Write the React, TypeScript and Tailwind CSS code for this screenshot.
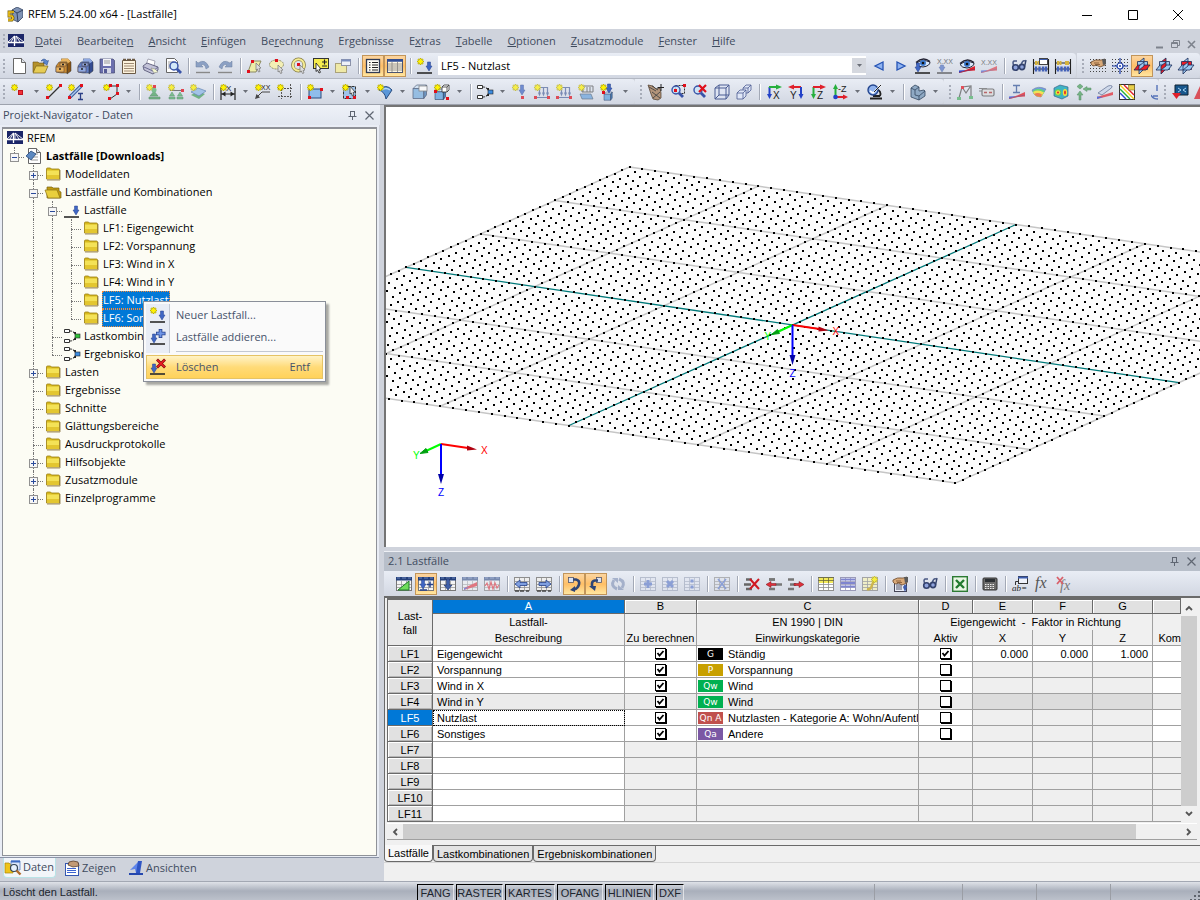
import type { ReactNode } from "react";

/* ── Icon parts ── */

const Star = ({ x = 0, y = 0 }: { x?: number; y?: number }) => (
  <g transform={`translate(${x} ${y})`}>
    <path d="M3.5 0v7M0 3.5h7M1 1l5 5M6 1L1 6" stroke="#b5a800" strokeWidth="1.6" />
    <path d="M3.5 .8v5.4M.8 3.5h5.4M1.5 1.5l4 4M5.5 1.5l-4 4" stroke="#fff200" strokeWidth="1" />
  </g>
);

const Red = ({ x, y }: { x: number; y: number }) => (
  <rect x={x} y={y} width="3" height="3" fill="#e0101c" />
);

const Down = ({ x = 8, y = 2, h = 11, c = "#3f66c4" }: { x?: number; y?: number; h?: number; c?: string }) => (
  <path d={`M${x - 1.5} ${y}h3v${h - 5}h1.500l-3 5l-3-5h1.500z`} fill={c} stroke="#26418c" strokeWidth=".5" />
);

const Dots = () => (
  <path
    d="M0 1.5h16M0 4.5h16M0 7.5h16M0 10.5h16M0 13.5h16"
    stroke="#444"
    strokeWidth="1"
    strokeDasharray="1 2"
  />
);

const Sheet = ({ head = "#24407c" }: { head?: string }) => (
  <>
    <rect x=".5" y="1.5" width="15" height="13" fill="#f4f4f4" stroke="#777" />
    <path d="M1 8.5h14M1 11.5h14M5.5 5v9M10.5 5v9" stroke="#999" strokeWidth=".8" />
    <rect x="0" y="1" width="16" height="3.5" fill={head} />
    <path d="M1 2h3M6 2h4M12 2h3" stroke="#7f97cc" strokeWidth=".8" />
  </>
);

const Grid = ({ c = "#8e8e8e", bg = "#eee" }: { c?: string; bg?: string }) => (
  <>
    <rect x=".5" y="1.5" width="15" height="13" fill={bg} stroke={c} />
    <path d="M1 5.5h14M1 8.5h14M1 11.5h14M5.5 2v12M10.5 2v12" stroke={c} strokeWidth=".8" />
  </>
);

const Eye = ({ y = 0 }: { y?: number }) => (
  <g transform={`translate(0 ${y})`}>
    <path d="M1 5.5Q7 .5 15 4Q15 8 8 9Q3 9 1 5.5z" fill="#d8e8fb" stroke="#223" />
    <path d="M1 4.500Q8-2 15 3.500" fill="none" stroke="#223" strokeWidth="1.400" />
    <circle cx="8" cy="5" r="3" fill="#3d7bd0" />
    <circle cx="8" cy="5" r="1.3" fill="#111" />
  </g>
);

const Goggles = () => (
  <>
    <path d="M3 8Q1 4 3 3l3 0M10 8Q11 2 14 3" fill="none" stroke="#4b5a85" strokeWidth="1.500" />
    <circle cx="4.500" cy="9.500" r="2.800" fill="#8fa3dc" stroke="#33426d" strokeWidth="1.600" />
    <circle cx="11" cy="9" r="2.600" fill="#8fa3dc" stroke="#33426d" strokeWidth="1.600" />
    <path d="M13.500 9L15 2M7 8.500h2" stroke="#33426d" strokeWidth="1.400" />
  </>
);

const Hand = () => (
  <>
    <path d="M1 4Q5 1 11 2L15 1v6L10 9Q7 6 3 8Q0 6 1 4z" fill="#d9a978" stroke="#5b3a20" strokeWidth=".7" />
    <path d="M4 5h5M5 6.5h5" stroke="#7d5330" strokeWidth=".8" />
    <path d="M12 1h4v5l-3 1z" fill="#5a5a5a" />
  </>
);

const Cabinet = ({ a, b, c }: { a: string; b: string; c: string }) => (
  <>
    <path d="M6 1h7l3 3v9l-4 3V6z" fill={c} stroke="#333" strokeWidth=".5" />
    <path d="M5 4l2-3.500h6l2.500 3-3 2z" fill={a} />
    <path d="M1 8l3-4h8v11H6l-5-1z" fill={b} stroke="#333" strokeWidth=".5" />
    <path d="M5 5h6v3H5zM1 9h8v5H1z" fill={a} stroke="#433" strokeWidth=".5" />
    <path d="M7 6.500h2M4 11h2" stroke="#222" strokeWidth="1.300" />
  </>
);

const Lens = ({ x = 9, y = 9 }: { x?: number; y?: number }) => (
  <>
    <path d={`M${x + 2} ${y + 2}l5 5`} stroke="#3853a8" strokeWidth="2.800" />
    <circle cx={x} cy={y} r="4" fill="#c9e4f7" fillOpacity=".8" stroke="#3853a8" strokeWidth="1.400" />
  </>
);

const Planes = ({ hot }: { hot: 0 | 1 | 2 }) => {
  const c = (n: number) => (n === hot ? "#ed1c24" : "#9cc9f0");
  return (
    <g stroke="#1a2c58" strokeWidth=".8">
      <path d="M5 4l5-4v11l-5 5z" fill={c(1)} />
      <path d="M3.500 3.500h10v8h-10z" fill={c(2)} />
      <path d="M0 12L4 7h12l-4 5z" fill={c(0)} />
      <path d="M5 12V8l5-4v4z" fill={c(1)} />
    </g>
  );
};

const Doc = () => (
  <>
    <path d="M2.500 .5h8l4 4v11h-12z" fill="#fff" stroke="#666" />
    <path d="M10.500 .5v4h4" fill="#dfe3ea" stroke="#666" />
  </>
);

const Abacus = () => (
  <>
    <path d="M.5 1v15M15.500 1v15M0 5h16M0 11h16" stroke="#222" strokeWidth="1.100" />
    <path d="M3 3v4M5.500 3v4M11 3v4M13 3v4" stroke="#d4b23c" strokeWidth="2" />
    <path d="M3 8.500v5M6.500 8.500v5M10 8.500v5M13 8.500v5" stroke="#4361b8" strokeWidth="2.400" />
  </>
);

const Ground = () => <path d="M0 15h15" stroke="#2a2a2a" strokeWidth="1.600" />;

const Diag = () => (
  <>
    <path d="M0 15V12.500L8 12z" fill="#2b4bd8" />
    <path d="M0 15L16 8v4.500L8 13z" fill="#e3202b" />
    <path d="M0 14.500L16 11" stroke="#8b2b55" strokeWidth=".8" />
  </>
);

const Cube = ({ x = 0, y = 0, s = 1 }: { x?: number; y?: number; s?: number }) => (
  <g transform={`translate(${x} ${y}) scale(${s})`} stroke="#2b3a5c" strokeWidth=".8">
    <path d="M0 4l4-4h11l-3 4z" fill="#cfe3f5" />
    <path d="M0 4h12v11H0z" fill="#7fb2e0" />
    <path d="M12 4l3-4v11l-3 4z" fill="#4b7fb5" />
  </g>
);

const Combi = ({ c }: { c: string }) => (
  <>
    <path d="M.5 1.500h5v3h-5zM.5 11.500h5v3h-5z" fill="#fff" stroke="#333" />
    <path d="M6 3Q10 3 11 6M6 13Q10 13 11 10" fill="none" stroke="#333" strokeDasharray="2 1" />
    <path d="M9 4l3 0v4zM9 12l3-4v4z" fill="#222" />
    <rect x="11" y="6" width="5" height="4" fill={c} stroke="#222" strokeWidth=".6" />
  </>
);

const LoadFrame = () => (
  <>
    <path d="M5 3.500h9M5.500 3v7M9.500 3v7M13.500 3v7M1 13.500h14" fill="none" stroke="#52689e" strokeWidth="1.200" />
    <path d="M4 8.500h3l-1.500 4zM8 8.500h3l-1.500 4zM12 8.500h3l-1.500 4z" fill="#52689e" />
    <Star />
    <Red x={0} y={12} />
    <Red x={13} y={12} />
  </>
);

const Letter = ({ x, y, s = 8, c = "#222", serif, children }: { x: number; y: number; s?: number; c?: string; serif?: boolean; children: string }) => (
  <text x={x} y={y} fontSize={s} fill={c} fontFamily={serif ? "Liberation Serif" : "Liberation Sans"} fontStyle={serif ? "italic" : "normal"}>
    {children}
  </text>
);

const Folder = ({ open }: { open?: boolean }) =>
  open ? (
    <>
      <path d="M2 3h5l1 1h6v3l2 1v6H2z" fill="#c19b12" stroke="#7a6210" strokeWidth=".7" />
      <path d="M0 6h12l3 8H3z" fill="#e9cf3d" stroke="#8a7114" strokeWidth=".7" />
    </>
  ) : (
    <>
      <path d="M1.500 4V3q0-1 1-1h3l1 1h7q1 0 1 1v9H1.500z" fill="#d8ba1e" stroke="#9a7d10" strokeWidth=".8" />
      <path d="M2 4.500h12V12H2z" fill="#f4e257" />
      <path d="M2 9h12v4H2z" fill="#e3c630" />
      <path d="M15 4v10H2" fill="none" stroke="#8a7440" strokeWidth=".8" />
    </>
  );

const Bridge = () => (
  <>
    <rect y="1" width="16" height="13" fill="#1b2668" />
    <path d="M0 9.500h16M6.500 3v10" stroke="#fff" strokeWidth="1.300" />
    <path d="M6.500 3L0 9M6.500 3L3 9" fill="none" stroke="#fff" strokeWidth=".9" />
    <path d="M8 3l8 6M8 3l4 6M8 3v6" fill="none" stroke="#fff" strokeWidth=".9" />
  </>
);

const RowArrows = ({ c, flip }: { c: string; flip?: boolean }) => (
  <>
    <path d={flip ? "M0 3.500h6M0 13h6" : "M10 8.500h6M3 3.500h6M3 13h6"} stroke="#777" strokeWidth="2.500" />
    <path d={flip ? "M2 8.500h6" : "M3 3.500h6"} stroke="#777" strokeWidth="2.500" />
    <path d={flip ? "M6 7.500h5V5.500l5 3-5 3v-2H6z" : "M10 7.500H5v-2l-5 3 5 3v-2h5z"} fill={c} stroke="#771018" strokeWidth=".5" />
  </>
);

const Tool = ({ sym }: { sym: string }) => (
  <>
    <Grid bg="#e3e7f3" c="#9aa3b8" />
    <path d={sym} stroke="#5573c8" strokeWidth="3" fill="none" />
  </>
);

const Axes = ({ h, v, t }: { h: string; v: string; t: string }) => (
  <>
    <path d="M3.500 3v9" stroke={v} strokeWidth="2" />
    <path d="M1 10h5l-2.500 5z" fill={v} />
    <path d="M3 3h9" stroke={h} strokeWidth="2" />
    <path d="M10 .5v5l6-2.500z" fill={h} />
    <Letter x={7} y={15} s={10}>
      {t}
    </Letter>
  </>
);

const icons: Record<string, ReactNode> = {
  /* file */
  doc: <Doc />,
  open: (
    <>
      <path d="M0 4h5l1 1h5v3l-8 6H0z" fill="#b4912a" stroke="#6b5310" strokeWidth=".6" />
      <path d="M3 8h12l-3 7H0z" fill="#e6cc55" stroke="#7a6118" strokeWidth=".7" />
      <path d="M8 3Q11-1 14 3l1.500-.5L14 7l-4-2.500 1.500-.5Q10 2 8 3z" fill="#5b87cf" stroke="#27427f" strokeWidth=".5" />
    </>
  ),
  cabBrown: <Cabinet a="#e8b35e" b="#c98a32" c="#8a5614" />,
  cabBlue: <Cabinet a="#8fa9e2" b="#5f7dc6" c="#344c92" />,
  save: (
    <>
      <path d="M1 1h13l1.500 1.500V15H1z" fill="#6b6fae" stroke="#44466f" strokeWidth=".7" />
      <path d="M4 1h8v7H4z" fill="#f3f3f8" />
      <path d="M5 3h6M5 5h6" stroke="#999" />
      <path d="M4 10h8v5H4z" fill="#d4d6e4" />
      <path d="M5 11h3v4H5z" fill="#555a94" />
    </>
  ),
  pages: (
    <>
      <path d="M1.500 2.500h13v13h-13z" fill="#fdf3dd" stroke="#6b5a45" />
      <path d="M2 1.500h3M6 1.500h4M11 1.500h3" stroke="#6b5a45" strokeWidth="1.500" />
      <path d="M3 5.500h10M3 8h10M3 10.500h10M3 13h10" stroke="#937e66" strokeWidth=".9" />
    </>
  ),
  print: (
    <>
      <path d="M5 1l7 2-1 5-8-1z" fill="#fff" stroke="#889" strokeWidth=".7" />
      <path d="M0 8l4-3 11 4v3l-5 4-9-4z" fill="#c3c3d8" stroke="#4b4b6b" strokeWidth=".8" />
      <path d="M1 9l9 4 5-4" fill="none" stroke="#6b6b93" />
      <path d="M8 10l4 1 3 3-4 1z" fill="#f2f6cf" stroke="#888" strokeWidth=".6" />
    </>
  ),
  preview: (
    <>
      <path d="M1.500 .5h8l3 3v11h-11z" fill="#fff" stroke="#666" />
      <path d="M3 4h6M3 6h4M3 8h3M3 10h3" stroke="#888" strokeWidth=".8" />
      <Lens x={9} y={8} />
    </>
  ),
  undo: (
    <>
      <path d="M1 9V3l2 2Q10 0 14 9l-3 2Q10 5 6 7l2 2z" fill="#8ba0c4" stroke="#6b7f9f" strokeWidth=".5" />
      <path d="M1 14.500h14" stroke="#888" strokeWidth="1.400" />
    </>
  ),
  redo: (
    <>
      <path d="M15 9V3l-2 2Q6 0 2 9l3 2Q6 5 10 7L8 9z" fill="#8ba0c4" stroke="#6b7f9f" strokeWidth=".5" />
      <path d="M1 14.500h14" stroke="#888" strokeWidth="1.400" />
    </>
  ),
  selPara: (
    <>
      <path d="M5 3h9L9 14H1z" fill="#eeeea8" stroke="#8a8860" />
      <Red x={4} y={2} />
      <Red x={0} y={12} />
      <path d="M9 5l5 5-2 .5 1 3-1.500.5-1.200-3L9 12z" fill="#ddd" stroke="#777" strokeWidth=".7" />
    </>
  ),
  selEll: (
    <>
      <ellipse cx="7.500" cy="6.500" rx="7" ry="4.500" fill="#f3efb5" stroke="#8c8a66" strokeDasharray="2 1" />
      <Red x={6} y={1} />
      <path d="M9 7l5 5-2 .5 1 2.500-1.500.5-1.200-2.500L9 14z" fill="#ddd" stroke="#777" strokeWidth=".7" />
    </>
  ),
  selCirc: (
    <>
      <circle cx="7.500" cy="7" r="5.700" fill="none" stroke="#857c45" strokeWidth="3.400" />
      <circle cx="7.500" cy="7" r="5.700" fill="none" stroke="#f5ec93" strokeWidth="2" />
      <Red x={6} y={5} />
      <path d="M9 7l5 5-2 .5 1 2.500-1.500.5-1.200-2.500L9 14z" fill="#ddd" stroke="#777" strokeWidth=".7" />
    </>
  ),
  plusMinus: (
    <>
      <rect x=".5" y=".5" width="15" height="10" fill="#f6ec4e" stroke="#333" />
      <path d="M9 4h5M11.500 1.500v5M9 8h5" stroke="#222" strokeWidth="1.200" />
      <path d="M3 5l5 6-2 .3 1.500 3-1.500.7L4.600 12 3 13.500z" fill="#fff" stroke="#111" strokeWidth=".8" />
    </>
  ),
  winCopy: (
    <>
      <rect x=".5" y="5.500" width="11" height="9" fill="#efe9a6" stroke="#aaa27a" />
      <rect x="6.500" y="1.500" width="9" height="6" fill="#eef1f8" stroke="#8d93a8" />
      <path d="M6.500 2.500h9" stroke="#7b8ec0" strokeWidth="2" />
    </>
  ),
  navList: (
    <>
      <rect x="1.500" y="1.500" width="13" height="13" fill="#fffdf5" stroke="#2e3a55" strokeWidth="1.300" />
      <path d="M4 4.500h1.500M4 7h1.500M4 9.500h1.500M4 12h1.500M7 4.500h6M7 7h6M7 9.500h6M7 12h6" stroke="#222" strokeWidth="1.100" />
    </>
  ),
  tableWin: (
    <>
      <rect x=".5" y="1.500" width="15" height="13" fill="#fff8e4" stroke="#4b5570" />
      <path d="M0 2.500h16" stroke="#2e4d96" strokeWidth="2.500" />
      <path d="M1 6h14M1 8h14M1 10h14M1 12h14M5 4v10M10.500 4v10" stroke="#8d8b86" strokeWidth=".9" />
    </>
  ),
  newLoad: (
    <>
      <Star />
      <Down x={12} y={4} h={9} />
      <Ground />
    </>
  ),
  addLoad: (
    <>
      <Down x={4} y={5} h={9} />
      <path d="M10.500 0v9M6 4.500h9.500" stroke="#26418c" strokeWidth="3.600" />
      <path d="M10.500 .7v7.600M6.700 4.500h8" stroke="#6f95e6" strokeWidth="2" />
      <Ground />
    </>
  ),
  delLoad: (
    <>
      <Down x={4} y={5} h={9} />
      <path d="M7 .5l8 8M15 .5l-8 8" stroke="#7f0a12" strokeWidth="2.800" />
      <path d="M7.500 1l7 7M14.500 1l-7 7" stroke="#ed1c24" strokeWidth="1.600" />
      <Ground />
    </>
  ),
  load: (
    <>
      <Down x={12} y={4} h={9} />
      <Ground />
    </>
  ),
  prev: <path d="M12 4v8L4 8z" fill="#8fb3f0" stroke="#2453b5" strokeWidth="1.300" />,
  next: <path d="M4 4v8l8-4z" fill="#8fb3f0" stroke="#2453b5" strokeWidth="1.300" />,
  eyeLoad: (
    <>
      <Eye />
      <Down x={3} y={5} h={9} />
      <Ground />
    </>
  ),
  valLoad: (
    <g opacity=".6">
      <Letter x={0} y={6} s={7}>X.XX</Letter>
      <Down x={5} y={7} h={7} />
      <Ground />
    </g>
  ),
  eyeDiag: (
    <>
      <Diag />
      <Eye y={1} />
    </>
  ),
  valDiag: (
    <g opacity=".55">
      <Letter x={0} y={7} s={7}>X.XX</Letter>
      <Diag />
    </g>
  ),
  goggles: <Goggles />,
  abacusDoc: (
    <>
      <Abacus />
      <rect x="6.500" y=".5" width="8" height="6" fill="#fff" stroke="#444" />
      <path d="M6.500 1.500h8" stroke="#3d5cae" />
    </>
  ),
  abacus: <Abacus />,
  handGrid: (
    <>
      <Dots />
      <Hand />
    </>
  ),
  gridSnap: (
    <>
      <Dots />
      <path d="M8 0v16M0 8h16" stroke="#1f3ea8" strokeWidth="1.200" />
      <circle cx="8" cy="8" r="3" fill="#fff" stroke="#1f3ea8" strokeWidth="1.200" />
      <circle cx="8" cy="8" r="1" fill="#1f3ea8" />
    </>
  ),
  planeXY: <Planes hot={0} />,
  planeYZ: <Planes hot={1} />,
  planeXZ: <Planes hot={2} />,

  /* model */
  node: (
    <>
      <Star />
      <rect x="7" y="6" width="5" height="5" fill="#c0101c" />
      <rect x="8" y="7" width="3" height="3" fill="#f03038" />
    </>
  ),
  line: (
    <>
      <path d="M2 14L14 2" stroke="#333" strokeWidth="1.300" />
      <Star />
      <Red x={0} y={12} />
      <Red x={13} y={0} />
    </>
  ),
  member: (
    <>
      <path d="M2 13L13 2" stroke="#3b5b9b" strokeWidth="3.500" />
      <path d="M2 13L13 2" stroke="#a9c9ef" strokeWidth="1.500" />
      <Star />
      <Red x={0} y={12} />
      <Red x={12} y={0} />
      <path d="M10 9.500h5M10 15.500h5M12.500 9v7" stroke="#2b3f86" strokeWidth="1.300" />
    </>
  ),
  poly: (
    <>
      <path d="M6 2h8v8L7 15" fill="none" stroke="#333" />
      <Star />
      <Red x={6} y={0} />
      <Red x={13} y={0} />
      <Red x={13} y={8} />
      <Red x={5} y={13} />
    </>
  ),
  support: (
    <g opacity=".75">
      <path d="M8 7l-4 5h8zM3 13h11v2H3z" fill="#4fa564" stroke="#3b7b4b" strokeWidth=".6" />
      <circle cx="8" cy="6" r="2.500" fill="#5ab372" />
      <Star />
      <Red x={7} y={1} />
    </g>
  ),
  lineSupport: (
    <g opacity=".75">
      <path d="M2 6.500h12" stroke="#555" />
      <path d="M4 8l-2.500 4h5zM12 8l-2.500 4h5zM1 13h6v2H1zM9 13h6v2H9z" fill="#5ab372" stroke="#3b7b4b" strokeWidth=".5" />
      <Star />
      <Red x={13} y={5} />
    </g>
  ),
  surfSupport: (
    <g opacity=".75">
      <path d="M1 11l7-4 7 3-6 5z" fill="#4fa564" />
      <path d="M1 8l7-4 8 3-7 5z" fill="#8fb9e8" stroke="#3f67a0" strokeWidth=".7" />
      <Star />
    </g>
  ),
  dim: (
    <>
      <path d="M1 4v12M15 4v12M1 10h14" stroke="#222" strokeWidth="1.200" />
      <path d="M1.500 10l4-2.500v5zM14.500 10l-4-2.500v5z" fill="#222" />
      <Letter x={6} y={7} s={8}>X</Letter>
      <Star />
    </>
  ),
  dimXX: (
    <>
      <Letter x={6} y={6} s={7}>XX</Letter>
      <path d="M15 8H7l-5 5" fill="none" stroke="#444" />
      <path d="M0 15l1.500-5L5 13.500z" fill="#444" />
      <Star />
    </>
  ),
  gridBox: (
    <>
      <path d="M4.500 2v13M13.500 0v15M1 4.500h15M1 12.500h15" stroke="#555" strokeDasharray="2 1" />
      <Star />
    </>
  ),
  surface: (
    <>
      <rect x="2" y="5" width="12" height="9" fill="#8fbdeb" stroke="#2b4b7c" />
      <Star />
      <Red x={1} y={12} />
      <Red x={13} y={4} />
    </>
  ),
  opening: (
    <>
      <path d="M1.500 2.500h12v12h-12z" fill="#9fc3ea" stroke="#333" strokeDasharray="3 1" />
      <path d="M8 2l5 6-2 .5 1 3-1.500.5-1.200-3L8 10z" fill="#eee" stroke="#333" strokeWidth=".8" />
      <Star />
      <Red x={4} y={12} />
      <Red x={11} y={12} />
    </>
  ),
  arcSurf: (
    <>
      <path d="M2 6Q9-1 15 6l-6 9Q8 8 2 6z" fill="#5a97d8" stroke="#284c80" />
      <path d="M5 6Q9 3 13 6" fill="none" stroke="#b9d8f5" strokeWidth="1.500" />
      <Star />
    </>
  ),
  solid: (
    <g opacity=".75">
      <Cube x={1} y={1} s={0.9} />
      <rect x="7" y="2" width="8" height="5" fill="#fff" stroke="#666" strokeWidth=".8" />
    </g>
  ),
  solidNew: (
    <>
      <Cube x={1} y={5} s={0.7} />
      <path d="M8 3l2-2h5v5l-2 2H8zM8 3h5v5M13 3l2-2" fill="#fff" stroke="#333" strokeWidth=".8" />
      <Star />
      <Red x={0} y={6} />
      <Red x={12} y={13} />
    </>
  ),
  combiBlue: <Combi c="#3b8be0" />,
  combiGreen: <Combi c="#2fbf3a" />,
  nodeLoad: (
    <g opacity=".7">
      <Star />
      <Down x={10} y={1} h={10} />
      <Red x={9} y={12} />
    </g>
  ),
  memberLoad: (
    <g opacity=".7">
      <LoadFrame />
    </g>
  ),
  surfLoad: (
    <g opacity=".7">
      <path d="M4 2h11v6H4zM5 3v5M9 3v5M12 3v5" fill="#dfe6f2" stroke="#555" />
      <path d="M2 10h11l2 5H4z" fill="#6ba3dd" stroke="#345" strokeWidth=".6" />
      <Star />
    </g>
  ),
  solidLoad: (
    <>
      <Cube x={4} y={8} s={0.55} />
      <Down x={9} y={0} h={9} />
      <Star />
      <Red x={2} y={7} />
    </>
  ),

  /* view */
  pan: (
    <>
      <path d="M0 1l5 1 3 3 4-1 1 5v5l-3 2-5-1-2-5z" fill="#b3947a" stroke="#4a3a2a" strokeWidth=".7" />
      <path d="M1 3l7 4M4 2l6 4M4 8l8 6M12 8l-7 6" stroke="#444" strokeWidth=".9" />
      <path d="M13 0v7M9.500 3.500h6.500" stroke="#222" />
    </>
  ),
  zoomWin: (
    <>
      <rect x="5.500" y="1.500" width="9" height="8" fill="none" stroke="#333" strokeDasharray="2 1" />
      <Lens x={6} y={6} />
      <Red x={4} y={5} />
      <Red x={13} y={0} />
    </>
  ),
  zoomX: (
    <>
      <Lens x={6} y={6} />
      <path d="M7 1l7 7M14 1L7 8" stroke="#e0101c" strokeWidth="2.200" />
    </>
  ),
  wireCube: (
    <path d="M1 4l4-3h10v10l-3 4H1zM1 4h11v11M12 4l3-3M5 1v10h10M1 15l4-4" fill="#dfe6f6" fillOpacity=".6" stroke="#4b5c93" />
  ),
  cubes: (
    <g fill="#dfe6f6" stroke="#4b5c93" strokeWidth=".8">
      <path d="M7 4l3-3h5v5l-3 3H7zM7 4h5v5M12 4l3-3" />
      <path d="M1 9l3-3h6v6l-3 3H1zM1 9h6v6M7 9l3-3" />
    </g>
  ),
  viewX: <Axes h="#26b03c" v="#2342c8" t="X" />,
  viewY: (
    <>
      <path d="M4 3h9" stroke="#e0202b" strokeWidth="2" />
      <path d="M6 .5v5L0 3z" fill="#e0202b" />
      <path d="M13 3v9" stroke="#2342c8" strokeWidth="2" />
      <path d="M10.500 10h5L13 15z" fill="#2342c8" />
      <Letter x={2} y={15} s={10}>Y</Letter>
    </>
  ),
  viewZ: <Axes h="#e0202b" v="#26b03c" t="Z" />,
  viewMZ: (
    <>
      <path d="M3.500 4v8" stroke="#26b03c" strokeWidth="2" />
      <path d="M1 5h5L3.500 0z" fill="#26b03c" />
      <path d="M4 13h8" stroke="#e0202b" strokeWidth="2" />
      <path d="M11 10.500v5l5-2.500z" fill="#e0202b" />
      <circle cx="3.500" cy="13" r="2.300" fill="#2342c8" />
      <Letter x={6} y={8} s={9}>-Z</Letter>
    </>
  ),
  render: (
    <>
      <path d="M9 5q6 2 4 7M3 14.500h12M6 12h7" fill="none" stroke="#222" strokeWidth="1.800" />
      <circle cx="6" cy="6" r="5" fill="#8fb2ee" stroke="#23458e" strokeWidth="1.400" />
      <path d="M3 7l3 2 8-8" fill="none" stroke="#fff" strokeWidth="1.600" />
      <path d="M7 8l7-7" stroke="#222" />
    </>
  ),
  lSolid: (
    <g stroke="#33475f" strokeWidth=".8">
      <path d="M1 4l4-3 4 2v4l5-1 1 1v5l-6 4-8-3z" fill="#8fa9c4" />
      <path d="M1 4l4 2v5l4 1v4M5 6l4-3M9 12l6-5" fill="none" />
    </g>
  ),
  frame: (
    <g opacity=".7">
      <path d="M2 14L5 3l9-1v11M5 3l4 6 4-6" fill="none" stroke="#555" strokeWidth="1.200" />
      <path d="M0 13h4v3H0zM12 12h4v3h-4z" fill="#4fb368" />
      <Red x={4} y={2} />
    </g>
  ),
  roller: (
    <g opacity=".7">
      <rect x="3" y="5" width="12" height="7" rx="1.500" fill="#ddd" stroke="#555" strokeWidth="1.200" />
      <path d="M0 4.500h8M0 7h3" stroke="#666" strokeWidth="1.200" />
      <path d="M5 8.500h3M10 8.500h3" stroke="#a33" strokeWidth="1.500" />
    </g>
  ),
  iDiag: (
    <g opacity=".75">
      <path d="M4 1.500h7M4 8.500h7M7.500 1v8" stroke="#3b5b9b" strokeWidth="1.300" />
      <Diag />
    </g>
  ),
  iso: (
    <g opacity=".85">
      <path d="M1 6Q7 1 15 5l-5 8Q5 13 3 10z" fill="#5f8fe0" stroke="#50648a" strokeWidth=".5" />
      <path d="M1.500 7Q7 2.500 14 7l-4 6Q5 13 3 10z" fill="#4fcf6f" />
      <path d="M2 8Q7 5 13 8.500L10 13Q5 13 3 10z" fill="#f4e23c" />
      <path d="M3 10Q7 8 11 10.500L10 13Q5 13 3 10z" fill="#ee6a3a" />
    </g>
  ),
  isoCube: (
    <>
      <path d="M1 4l6-3 8 2v9l-6 3-8-3z" fill="#3fb3c4" stroke="#39648a" strokeWidth=".7" />
      <circle cx="5" cy="8.500" r="3.300" fill="#5fd05a" />
      <circle cx="5" cy="8.500" r="2.200" fill="#f4e23c" />
      <circle cx="5" cy="8.500" r="1.100" fill="#e8342b" />
      <ellipse cx="12" cy="8.500" rx="2.200" ry="3.500" fill="#f4e23c" />
      <ellipse cx="12" cy="8.500" rx="1" ry="2" fill="#e8342b" />
    </>
  ),
  react: (
    <g opacity=".8" fill="#5aa86a" stroke="#3b7b4b" strokeWidth=".5">
      <path d="M4 16V11H2l3-4 3 4H6v5z" />
      <path d="M16 4h-4V2.500L8 5l4 2.500V6h4zM5 0l3 2.500L5 5 2 2.500z" />
    </g>
  ),
  pen: (
    <g opacity=".75">
      <path d="M0 15V13L16 8v3z" fill="#e3303b" />
      <path d="M0 15l6-2-6-.5z" fill="#2b4bd8" />
      <path d="M1 9L11 2q3-1 4 0t-2 3L5 11z" fill="#c9d6ea" stroke="#46577f" strokeWidth=".8" />
    </g>
  ),
  hatch: (
    <>
      <rect x=".5" y=".5" width="15" height="15" fill="#fff" stroke="#333" />
      <path d="M1 5l10 10" stroke="#26b03c" strokeWidth="1.400" />
      <path d="M1 9l6 6" stroke="#2b4bd8" strokeWidth="1.400" />
      <path d="M1 1l14 14" stroke="#f0d020" strokeWidth="1.400" />
      <path d="M5 1l10 10" stroke="#e0202b" strokeWidth="1.400" />
      <rect x="9.500" y="1" width="6" height="5" fill="#e7cf4a" stroke="#86702a" strokeWidth=".6" />
    </>
  ),
  half: <path d="M6 1v6M0 11q2 4 7 4M2 12h5" fill="none" stroke="#5573b8" strokeWidth="1.400" />,
  screen: (
    <>
      <path d="M3 1h13v10H3z" fill="#17568c" stroke="#123" />
      <path d="M6 4l3 2-3 2M14 4l-3 2 3 2" fill="none" stroke="#a9d6f5" />
      <path d="M0 9h9l-4.500 6z" fill="#e0202b" />
    </>
  ),
  edge: <path d="M0 15L6 2v13z" fill="#d9505a" />,

  /* table */
  tblGreen: (
    <>
      <Sheet />
      <path d="M2 14L13 5v9z" fill="#6fdc5a" stroke="#1f7a2b" />
    </>
  ),
  tblLoad: (
    <>
      <Sheet />
      <Down x={5} y={4} h={9} />
      <path d="M9 8.500h6M12 5.500v6M2 14h7" stroke="#26418c" strokeWidth="1.500" />
    </>
  ),
  tblDown: (
    <>
      <Sheet />
      <path d="M6.500 3h3v6H12l-4 5-4-5h2.500z" fill="#3f5fa8" stroke="#1d2f66" strokeWidth=".6" />
    </>
  ),
  tblDiag: (
    <g opacity=".55">
      <Sheet />
      <path d="M2 14V12L15 6v4z" fill="#e3202b" />
      <path d="M2 14v-2l5-1z" fill="#2b4bd8" />
    </g>
  ),
  tblWave: (
    <g opacity=".55">
      <Sheet />
      <path d="M1 10l2-3 2 6 2-7 2 7 2-6 2 5 2-3" fill="none" stroke="#e3202b" strokeWidth="1.200" />
    </g>
  ),
  tblLeft: (
    <>
      <Grid />
      <path d="M1 8l5-4v2.500h7v3H6V12z" fill="#7f9fe0" stroke="#26418c" strokeWidth=".8" />
      <path d="M1 15h4M6 15h4M12 15h3" stroke="#444" strokeWidth="1.400" />
    </>
  ),
  tblRight: (
    <>
      <Grid />
      <path d="M15 8l-5-4v2.500H3v3h7V12z" fill="#7f9fe0" stroke="#26418c" strokeWidth=".8" />
      <path d="M1 15h4M6 15h4M12 15h3" stroke="#444" strokeWidth="1.400" />
    </>
  ),
  turnR: (
    <>
      <rect x="2.500" y="1.500" width="5" height="5" fill="#dce3f2" stroke="#556" strokeWidth=".8" />
      <path d="M7 3.500h3q4 1 3 5-1 4-5 5" fill="none" stroke="#2f4577" strokeWidth="2.600" />
      <path d="M9 10v6l-5-2z" fill="#2f4577" />
    </>
  ),
  turnL: (
    <>
      <rect x="8.500" y="1.500" width="5" height="5" fill="#dce3f2" stroke="#556" strokeWidth=".8" />
      <path d="M10 4.500H7q-3 .5-3 3v4" fill="none" stroke="#2f4577" strokeWidth="2.600" />
      <path d="M1 10h7l-1 5z" fill="#2f4577" />
    </>
  ),
  cycle: (
    <g opacity=".6">
      <path d="M7 13Q0 10 4 4M9 3q7 3 3 9" fill="none" stroke="#7f90b5" strokeWidth="3" />
      <path d="M2 2h6v5zM14 14H8V9z" fill="#7f90b5" />
    </g>
  ),
  cellPlus: (
    <g opacity=".6">
      <Tool sym="M8 4v8M4 8h8" />
    </g>
  ),
  cellX: (
    <g opacity=".6">
      <Tool sym="M5 5l6 6M11 5l-6 6" />
    </g>
  ),
  cellDots: (
    <g opacity=".6">
      <Tool sym="M8 3.500v3M8 9.500v3" />
    </g>
  ),
  cellClear: (
    <g opacity=".6">
      <Grid bg="#dfe3ec" />
      <path d="M4 3l8 10M12 3L4 13" stroke="#5573c8" strokeWidth="1.500" />
    </g>
  ),
  rowDel: (
    <>
      <path d="M2 3.500h6M0 8.500h7M2 13h6" stroke="#666" strokeWidth="2.500" />
      <path d="M6 3l9 10M15 3L6 13" stroke="#d01822" strokeWidth="2" />
    </>
  ),
  rowLeft: <RowArrows c="#e0303b" />,
  rowRight: <RowArrows c="#e0303b" flip />,
  tblYellow: (
    <>
      <Grid bg="#fff" />
      <rect x="1" y="2" width="14" height="5" fill="#f3ea5a" />
      <path d="M0 1.500h16M0 4.500h16M5.500 2v5M10.500 2v5" stroke="#6b6a3a" strokeWidth=".8" />
    </>
  ),
  tblBlue: (
    <>
      <Grid bg="#fff" c="#9a9ab8" />
      <path d="M1 3.500h14M1 7h14M1 10.500h14" stroke="#7f85cf" strokeWidth="2" />
    </>
  ),
  tblPen: (
    <g opacity=".75">
      <Grid bg="#f6f3bb" />
      <path d="M5 13q4 1 5-4l3-6" fill="none" stroke="#c9a91b" strokeWidth="2.500" />
      <Star x={9} y={0} />
    </g>
  ),
  tblHand: (
    <>
      <rect x="2.500" y="5.500" width="12" height="10" fill="#e9edf7" stroke="#445" />
      <path d="M4 9h6M4 11h6M4 13h6" stroke="#556" />
      <path d="M13 8l2 3-2 5-2-5z" fill="#3d5cae" />
      <Hand />
    </>
  ),
  excel: (
    <>
      <rect x=".7" y=".7" width="14.600" height="14.600" fill="#e9f6e4" stroke="#2c7a34" strokeWidth="1.400" />
      <path d="M4 4l8 8M12 4l-8 8" stroke="#217a2f" strokeWidth="2.400" />
    </>
  ),
  calc: (
    <>
      <rect x="1" y="2" width="14" height="12" rx="1" fill="#6b6b6b" stroke="#333" />
      <rect x="3" y="3" width="10" height="3" fill="#2b2f33" />
      <path d="M3 8.500h10M3 10.500h10M3 12.500h10" stroke="#eee" strokeWidth="1.200" strokeDasharray="1.500 1" />
    </>
  ),
  abEq: (
    <>
      <rect x="6.500" y=".5" width="9" height="7" fill="#eef2fb" stroke="#333" />
      <path d="M6 1.500h10" stroke="#3d5cae" strokeWidth="2" />
      <path d="M3.500 9V5.500H6" fill="none" stroke="#333" />
      <Letter x={0} y={15} s={9} serif>ab=</Letter>
    </>
  ),
  fx: <Letter x={1} y={12} s={16} c="#555" serif>fx</Letter>,
  fxDel: (
    <>
      <Letter x={4} y={14} s={14} c="#777" serif>fx</Letter>
      <path d="M1 1l6 7M7 1L1 8" stroke="#d9606a" strokeWidth="1.800" />
    </>
  ),

  /* navigator */
  bridge: <Bridge />,
  project: (
    <>
      <Doc />
      <path d="M5 6h7M5 9h7M5 12h7" stroke="#999" />
      <path d="M0 8l5-5 5 3-5 6z" fill="#5c88c0" stroke="#2b4b7c" strokeWidth=".8" />
    </>
  ),
  folder: <Folder />,
  folderOpen: <Folder open />,
  tabData: (
    <>
      <path d="M0 3h4l1 1h3v9H0z" fill="#f0c419" stroke="#a88410" strokeWidth=".7" />
      <path d="M6 1h9v9H6z" fill="#dbe7fa" stroke="#5b82c4" strokeWidth=".8" />
      <path d="M6 1.500h9" stroke="#3b6bc4" strokeWidth="2" />
      <circle cx="9" cy="8" r="3.500" fill="#e6f1fc" stroke="#345" strokeWidth="1.200" />
      <path d="M11.500 10.500l4 4" stroke="#b06a2b" strokeWidth="2.400" />
    </>
  ),
  tabShow: (
    <>
      <rect x="1.500" y="3.500" width="13" height="12" fill="#fff" stroke="#3557b0" />
      <path d="M3 8.500h9M3 10.500h9M3 12.500h9" stroke="#3b63d0" strokeWidth="1.200" />
      <path d="M5 2q4-2 9 0l1 4-6 1-5-2z" fill="#c29a75" stroke="#4a3120" strokeWidth=".7" />
    </>
  ),
  tabViews: (
    <>
      <path d="M11 1l-9 9 5-1 1 4 2-1z" fill="#5f85ea" />
      <path d="M10 1h4l-2 12H8z" fill="#2f55c4" />
      <path d="M1 13h14v2H1z" fill="#2447ae" />
    </>
  ),
};

const Icon = ({ name }: { name: string }) => (
  <svg viewBox="0 0 16 16" className="size-4 shrink-0 overflow-visible" aria-hidden="true">
    {icons[name]}
  </svg>
);

/* ── Toolbars ── */

const ToolButton = ({ name, on }: { name: string; on?: boolean }) => (
  <button
    aria-label={name}
    className={
      on
        ? "flex h-[22px] w-[22px] shrink-0 items-center justify-center border border-[#c2955a] bg-linear-to-b from-[#fbd5a0] via-[#ffbf66] to-[#ffe6a0]"
        : "flex h-[22px] w-[22px] shrink-0 items-center justify-center"
    }
  >
    <Icon name={name} />
  </button>
);

const Arrow = () => (
  <button aria-label="Mehr" className="flex h-[22px] w-[13px] shrink-0 items-center justify-center">
    <svg viewBox="0 0 5 3" className="h-[3px] w-[5px]" aria-hidden="true">
      <path d="M0 0h5L2.500 3z" fill="#6b6f78" />
    </svg>
  </button>
);

const Sep = () => (
  <div className="flex w-2 shrink-0 justify-center">
    <div className="h-4 w-px bg-[#a3a9b6] shadow-[1px_0_0_#fff]" />
  </div>
);

const Grip = () => (
  <div className="flex w-2 shrink-0 flex-col items-center gap-0.5">
    {[0, 1, 2, 3].map((i) => (
      <div key={i} className="size-0.5 bg-[#a7acb8]" />
    ))}
  </div>
);

// "!" in front marks a pressed button, "v" a drop-down arrow, "|" a separator
const Tools = ({ items }: { items: string }) => (
  <>
    {items.split(" ").map((item, i) => {
      if (item === "|") return <Sep key={i} />;
      if (item === "v") return <Arrow key={i} />;
      if (item.startsWith("!")) return <ToolButton key={i} name={item.slice(1)} on />;
      return <ToolButton key={i} name={item} />;
    })}
  </>
);

const band = "flex h-[25px] shrink-0 items-center rounded-r-sm bg-linear-to-b from-[#e9edf5] to-[#d2d7e2]";

const menus = [
  ["", "D", "atei"],
  ["Bearbeite", "n", ""],
  ["", "A", "nsicht"],
  ["", "E", "infügen"],
  ["Be", "r", "echnung"],
  ["Er", "g", "ebnisse"],
  ["E", "x", "tras"],
  ["", "T", "abelle"],
  ["", "O", "ptionen"],
  ["", "Z", "usatzmodule"],
  ["", "F", "enster"],
  ["", "H", "ilfe"],
];

const TitleBar = () => (
  <header className="flex h-[29px] shrink-0 items-center bg-white pl-[7px] text-[11px] text-black">
    <svg viewBox="0 0 16 16" className="size-4" aria-hidden="true">
      <path d="M5 3l5-3 6 3v7l-5 5-6-3z" fill="#7f93b5" stroke="#33425f" strokeWidth=".8" />
      <path d="M5 3l5 3 6-3M10 6l1 9" fill="none" stroke="#33425f" />
      <path d="M7 5H2v4h3q2 2 0 4H1" fill="none" stroke="#6b5600" strokeWidth="2.800" />
      <path d="M7 5H2v4h3q2 2 0 4H1" fill="none" stroke="#f3c51b" strokeWidth="1.600" />
    </svg>
    <h1 className="ml-[5px] flex-1">RFEM 5.24.00 x64 - [Lastfälle]</h1>
    <div className="flex">
      <button aria-label="Minimieren" className="flex h-7 w-[46px] items-center justify-center">
        <svg viewBox="0 0 10 10" className="size-[10px]" aria-hidden="true"><path d="M0 5.500h10" stroke="#000" /></svg>
      </button>
      <button aria-label="Maximieren" className="flex h-7 w-[46px] items-center justify-center">
        <svg viewBox="0 0 10 10" className="size-[10px]" aria-hidden="true"><path d="M.5 .5h9v9h-9z" fill="none" stroke="#000" /></svg>
      </button>
      <button aria-label="Schließen" className="flex h-7 w-[44px] items-center justify-center">
        <svg viewBox="0 0 10 10" className="size-[10px]" aria-hidden="true"><path d="M0 0l10 10M10 0L0 10" stroke="#000" /></svg>
      </button>
    </div>
  </header>
);

const MenuBar = () => (
  <nav className="flex h-6 shrink-0 items-center bg-[#cfd3dc] text-[11px] text-[#3f4b5e]">
    <Grip />
    <Icon name="bridge" />
    <div className="ml-[11px] flex gap-[15px]">
      {menus.map(([before, key, after]) => (
        <button key={before + key + after} className="whitespace-nowrap">
          {before}
          <span className="underline">{key}</span>
          {after}
        </button>
      ))}
    </div>
    <div className="ml-auto flex gap-[7px] self-end pr-1 pb-1 text-[#7d828c]">
      <svg viewBox="0 0 9 9" className="size-[9px]" aria-hidden="true"><path d="M1 7.500h7" stroke="currentColor" strokeWidth="2" /></svg>
      <svg viewBox="0 0 9 9" className="size-[9px]" aria-hidden="true">
        <path d="M2.500 2V.5h6v5H7M.5 2.500h6v5h-6zM.5 3.500h6" fill="none" stroke="currentColor" />
      </svg>
      <svg viewBox="0 0 9 9" className="size-[9px]" aria-hidden="true"><path d="M1 1l7 7M8 1L1 8" stroke="currentColor" strokeWidth="1.600" /></svg>
    </div>
  </nav>
);

const Toolbars = () => (
  <div className="flex shrink-0 flex-col overflow-hidden border-b border-[#9da2ad] bg-[#cfd3dc]">
    <div className="flex border-b border-[#b3b8c3]">
      <div className={`${band} min-w-0 flex-1`}>
        <Grip />
        <Tools items="doc open cabBrown cabBlue save pages print preview | undo redo | selPara selEll selCirc plusMinus winCopy | !navList !tableWin | newLoad" />
        <div className="relative ml-0.5 h-[19px] min-w-0 flex-1">
          <select aria-label="Lastfall" className="block h-[19px] w-full appearance-none bg-white px-[3px] text-[11px] leading-[19px] text-black">
            <option>LF5 - Nutzlast</option>
          </select>
          <div className="pointer-events-none absolute top-0.5 right-0 flex h-[15px] w-[14px] items-center justify-center bg-[#d5d8df]">
            <svg viewBox="0 0 5 3" className="h-[3px] w-[5px]" aria-hidden="true"><path d="M0 0h5L2.500 3z" fill="#6b6f78" /></svg>
          </div>
        </div>
        <div className="flex items-center pr-0.5 pl-0.5">
          <Tools items="prev next eyeLoad valLoad eyeDiag valDiag | goggles abacusDoc abacus" />
        </div>
      </div>
      <div className={`${band} ml-px pr-[3px] pl-0.5`}>
        <Grip />
        <Tools items="handGrid gridSnap !planeXY planeYZ planeXZ" />
      </div>
    </div>
    <div className="flex overflow-hidden">
      <div className={`${band} pr-[3px]`}>
        <Grip />
        <Tools items="node v line member v poly v | support lineSupport surfSupport | dim v dimXX gridBox | surface v opening v arcSurf v solid solidNew v | combiBlue v nodeLoad memberLoad memberLoad surfLoad solidLoad v" />
      </div>
      <div className={`${band} pr-0.5 pl-0.5`}>
        <Grip />
        <Tools items="pan zoomWin zoomX wireCube cubes | viewX viewY viewZ viewMZ v render v | lSolid v" />
      </div>
      <div className={`${band} pl-0.5`}>
        <Grip />
        <Tools items="frame roller | iDiag iso isoCube react pen hatch v" />
        <div className="w-2 overflow-hidden">
          <Icon name="half" />
        </div>
      </div>
      <div className={`${band} pl-0.5`}>
        <Grip />
        <Tools items="screen edge" />
      </div>
    </div>
  </div>
);

const PanelControls = () => (
  <div className="flex items-center gap-2 text-[#5f6672]">
    <button aria-label="Anheften">
      <svg viewBox="0 0 9 9" className="size-[9px]" aria-hidden="true">
        <path d="M2.500 1v4M6.500 1v4M2 .5h5M.5 5.500h8M4.500 6v3" stroke="currentColor" />
      </svg>
    </button>
    <button aria-label="Schließen">
      <svg viewBox="0 0 9 9" className="size-[9px]" aria-hidden="true">
        <path d="M.5 .5l8 8M8.500 .5l-8 8" stroke="currentColor" strokeWidth="1.200" />
      </svg>
    </button>
  </div>
);

/* ── Navigator ── */

type Node = { cols: string; icon: string; text: string; box?: "+" | "-"; bold?: boolean; sel?: boolean };

// cols: one sign per indent, "|" line through, "." nothing, "T" branch, "L" last branch
const tree: Node[] = [
  { cols: "", icon: "bridge", text: "RFEM" },
  { cols: "L", icon: "project", text: "Lastfälle [Downloads]", box: "-", bold: true },
  { cols: ".T", icon: "folder", text: "Modelldaten", box: "+" },
  { cols: ".T", icon: "folderOpen", text: "Lastfälle und Kombinationen", box: "-" },
  { cols: ".|T", icon: "load", text: "Lastfälle", box: "-" },
  { cols: ".||T", icon: "folder", text: "LF1: Eigengewicht" },
  { cols: ".||T", icon: "folder", text: "LF2: Vorspannung" },
  { cols: ".||T", icon: "folder", text: "LF3: Wind in X" },
  { cols: ".||T", icon: "folder", text: "LF4: Wind in Y" },
  { cols: ".||T", icon: "folder", text: "LF5: Nutzlast", sel: true },
  { cols: ".||L", icon: "folder", text: "LF6: Sonstiges", sel: true },
  { cols: ".|T", icon: "combiGreen", text: "Lastkombinationen" },
  { cols: ".|L", icon: "combiBlue", text: "Ergebniskombinationen" },
  { cols: ".T", icon: "folder", text: "Lasten", box: "+" },
  { cols: ".T", icon: "folder", text: "Ergebnisse" },
  { cols: ".T", icon: "folder", text: "Schnitte" },
  { cols: ".T", icon: "folder", text: "Glättungsbereiche" },
  { cols: ".T", icon: "folder", text: "Ausdruckprotokolle" },
  { cols: ".T", icon: "folder", text: "Hilfsobjekte", box: "+" },
  { cols: ".T", icon: "folder", text: "Zusatzmodule", box: "+" },
  { cols: ".L", icon: "folder", text: "Einzelprogramme", box: "+" },
];

const Branch = ({ sign, box }: { sign: string; box?: string }) => (
  <div className="relative h-[18px] w-[19px] shrink-0">
    {(sign === "|" || sign === "T") && <div className="absolute inset-y-0 left-[9px] border-l border-dotted border-[#777]" />}
    {sign === "L" && <div className="absolute top-0 left-[9px] h-[10px] border-l border-dotted border-[#777]" />}
    {(sign === "T" || sign === "L") && <div className="absolute top-[10px] right-0 left-[9px] border-t border-dotted border-[#777]" />}
    {box && (
      <svg viewBox="0 0 9 9" className="absolute top-1.5 left-[5px] size-[9px]" aria-hidden="true">
        <rect x=".5" y=".5" width="8" height="8" fill="#f6f6f6" stroke="#919191" />
        <path d={box === "+" ? "M2 4.500h5M4.500 2v5" : "M2 4.500h5"} stroke="#2b4b9b" />
      </svg>
    )}
  </div>
);

const ContextMenu = () => (
  <div className="absolute top-[172px] left-[140px] w-[183px] border border-[#8a8f99] bg-[#fafafa] text-[11px] text-[#47536b] shadow-[3px_3px_2px_#00000055]">
    <div className="relative px-0.5 py-0.5">
      <div className="absolute top-0.5 bottom-[28px] left-0.5 w-6 border-r border-[#c3c8d2] bg-[#e9edf5]" />
      <button className="relative flex h-[22px] w-full items-center gap-[10px] pl-1">
        <Icon name="newLoad" />
        Neuer Lastfall...
      </button>
      <button className="relative flex h-[22px] w-full items-center gap-[10px] pl-1">
        <Icon name="addLoad" />
        Lastfälle addieren...
      </button>
      <div className="my-[3px] ml-[30px] h-px bg-[#c3c8d2]" />
      <button className="relative flex h-6 w-full items-center gap-[10px] border border-[#e5c365] bg-linear-to-b from-[#fff3c6] via-[#ffdb78] via-50% to-[#ffd25a] pr-3 pl-[3px]">
        <Icon name="delLoad" />
        Löschen
        <span className="ml-auto">Entf</span>
      </button>
    </div>
  </div>
);

const Navigator = () => (
  <aside className="flex w-[380px] shrink-0 flex-col bg-[#cfd3dc]">
    <div className="flex h-5 items-center justify-between bg-linear-to-b from-[#eef1f8] to-[#e2e7f0] pr-[6px] pl-[3px] text-[11px] text-[#3f4b5e]">
      <h2>Projekt-Navigator - Daten</h2>
      <PanelControls />
    </div>
    <div className="mr-px flex min-h-0 flex-1 flex-col border-b border-[#8a92a5] bg-[#e9edf5] px-0.5 pt-0.5 pb-px">
      <div className="relative flex-1 border border-t-2 border-[#8f9298] bg-[#fcfcf4] pl-0.5">
        <ul className="text-[11px] text-black">
          {tree.map((n) => (
            <li key={n.text + n.icon} className="flex h-[18px] items-center">
              {n.cols.split("").map((c, i) => (
                <Branch key={i} sign={c} box={i === n.cols.length - 1 ? n.box : undefined} />
              ))}
              <div className="mr-1 ml-0.5">
                <Icon name={n.icon} />
              </div>
              <span
                className={
                  n.sel
                    ? "-ml-px h-[18px] border border-dotted border-[#f08a3c] bg-[#0078d7] leading-4 whitespace-nowrap text-white"
                    : n.bold
                      ? "font-bold whitespace-nowrap"
                      : "whitespace-nowrap"
                }
              >
                {n.text}
              </span>
            </li>
          ))}
        </ul>
        <ContextMenu />
      </div>
    </div>
    <div className="flex h-[23px] items-start gap-2 pl-[3px] text-[11px] text-[#3f4b5e]">
      <button className="flex h-5 items-center gap-0.5 rounded-b-sm border border-t-0 border-[#b9e3e6] bg-[#f2f5f9] px-px">
        <Icon name="tabData" />
        Daten
      </button>
      <button className="flex h-5 items-center gap-0.5">
        <Icon name="tabShow" />
        Zeigen
      </button>
      <button className="ml-1 flex h-5 items-center gap-0.5">
        <Icon name="tabViews" />
        Ansichten
      </button>
    </div>
  </aside>
);

/* ── Work plane ── */

const O = [406.5, 218];
const UX = [12.88, 1.92];
const UY = [-7.45, 3.35];
const at = (a: number, b: number) => [O[0] + a * UX[0] + b * UY[0], O[1] + a * UX[1] + b * UY[1]];
const seg = (a1: number, b1: number, a2: number, b2: number) => `M${at(a1, b1).join(" ")}L${at(a2, b2).join(" ")}`;

const steps = Array.from({ length: 61 }, (_, i) => i - 30);
const dots = steps
  .flatMap((a) => steps.map((b) => at(a, b)))
  .map(([x, y]) => `M${Math.round(x - 1)} ${Math.round(y - 1)}h2v2h-2z`)
  .join("");
const lines = [-30, -20, -10, 10, 20, 30].map((k) => seg(k, -30, k, 30) + seg(-30, k, 30, k)).join("");

const Tripod = ({ x, y }: { x: number; y: number }) => (
  <g transform={`translate(${x} ${y})`} fontFamily="Liberation Sans" fontSize="10">
    <path d="M0 0l27 4" stroke="#f00" strokeWidth="2" />
    <path d="M26 1.500v5l10-1z" fill="#b00010" />
    <path d="M0 0l-15 7" stroke="#0f0" strokeWidth="2" />
    <path d="M-21 9.500l6-5 2 4z" fill="#00a010" stroke="#00a010" />
    <path d="M0 0v31" stroke="#00f" strokeWidth="2" />
    <path d="M-3 30h6l-3 10z" fill="#0000a8" />
    <text x="40" y="10" fill="#f00">X</text>
    <text x="-28" y="15" fill="#0f0">Y</text>
    <text x="-3" y="52" fill="#00f">Z</text>
  </g>
);

const WorkPlane = () => (
  <div className="min-h-0 flex-1 overflow-hidden border-t-2 border-l-2 border-[#747474] bg-white">
    <svg className="block h-full w-full" role="img" aria-label="Arbeitsebene">
      <path d={`M${at(-30, -30)}L${at(30, -30)}L${at(30, 30)}L${at(-30, 30)}z`} fill="#fcfcfc" />
      <path d={lines} stroke="#c6c6c6" strokeWidth="1.500" />
      <path d={seg(0, -30, 0, 30) + seg(-30, 0, 30, 0)} stroke="#007a7a" strokeWidth="1.300" />
      <path d={dots} fill="#000" shapeRendering="crispEdges" />
      <Tripod x={O[0]} y={O[1]} />
      <Tripod x={55} y={337} />
    </svg>
  </div>
);

/* ── Table ── */

type Case = { nr: string; name?: string; tag?: string; tagColor?: string; cat?: string; own?: boolean; factors?: string[] };

const cases: Case[] = [
  { nr: "LF1", name: "Eigengewicht", tag: "G", tagColor: "bg-black", cat: "Ständig", own: true, factors: ["0.000", "0.000", "1.000"] },
  { nr: "LF2", name: "Vorspannung", tag: "P", tagColor: "bg-[#c8a000]", cat: "Vorspannung" },
  { nr: "LF3", name: "Wind in X", tag: "Qw", tagColor: "bg-[#00b050]", cat: "Wind" },
  { nr: "LF4", name: "Wind in Y", tag: "Qw", tagColor: "bg-[#00b050]", cat: "Wind" },
  { nr: "LF5", name: "Nutzlast", tag: "Qn A", tagColor: "bg-[#c0504d]", cat: "Nutzlasten - Kategorie A: Wohn/Aufentl" },
  { nr: "LF6", name: "Sonstiges", tag: "Qa", tagColor: "bg-[#7b58a4]", cat: "Andere" },
  { nr: "LF7" },
  { nr: "LF8" },
  { nr: "LF9" },
  { nr: "LF10" },
  { nr: "LF11" },
];

const Check = ({ label, on }: { label: string; on?: boolean }) => (
  <label className="relative mx-auto block size-[11px]">
    <input
      type="checkbox"
      aria-label={label}
      defaultChecked={on}
      className="peer block size-[11px] appearance-none border border-black bg-white shadow-[1px_1px_0_#000]"
    />
    <svg viewBox="0 0 11 11" className="pointer-events-none absolute inset-0 hidden size-[11px] peer-checked:block" aria-hidden="true">
      <path d="M2.500 5l2 2.500L8.500 3" fill="none" stroke="#000" strokeWidth="1.800" />
    </svg>
  </label>
);

const cell = "h-4 overflow-hidden border-r border-b border-[#a0a0a0] p-0 whitespace-nowrap";
const letter = "h-[14px] border-r border-b border-[#6a6a6a] bg-[#e1e1e1] p-0 font-normal shadow-[inset_1px_1px_0_#fff]";
const head = "h-4 bg-[#f0f0f0] p-0 font-normal whitespace-nowrap";

const LoadCaseTable = () => (
  <table className="w-full table-fixed border-separate border-spacing-0 border-t-2 border-l border-[#6a6a6a] text-[11px] leading-[14px] text-black">
    <colgroup>
      <col className="w-[45px]" />
      <col className="w-[192px]" />
      <col className="w-[72px]" />
      <col className="w-[222px]" />
      <col className="w-[54px]" />
      <col className="w-[60px]" />
      <col className="w-[60px]" />
      <col className="w-[60px]" />
      <col />
    </colgroup>
    <thead>
      <tr>
        <th rowSpan={3} className="border-r border-b border-[#6a6a6a] bg-[#e9e9e9] p-0 font-normal">
          Last-
          <br />
          fall
        </th>
        <th className="h-[14px] border-r border-b border-[#6a6a6a] bg-[#0078d7] p-0 leading-[13px] font-normal text-white">A</th>
        {["B", "C", "D", "E", "F", "G", ""].map((l, i) => (
          <th key={i} className={`${letter} leading-[13px]`}>
            {l}
          </th>
        ))}
      </tr>
      <tr>
        <th className={`${head} border-r border-[#a0a0a0]`}>Lastfall-</th>
        <th className={`${head} border-r border-[#a0a0a0]`} />
        <th className={`${head} border-r border-[#a0a0a0]`}>EN 1990 | DIN</th>
        <th colSpan={4} className={`${head} border-r border-[#a0a0a0]`}>
          Eigengewicht &nbsp;-&nbsp; Faktor in Richtung
        </th>
        <th className={head} />
      </tr>
      <tr>
        {["Beschreibung", "Zu berechnen", "Einwirkungskategorie", "Aktiv", "X", "Y", "Z"].map((t) => (
          <th key={t} className={`${head} border-r border-b border-[#a0a0a0]`}>
            {t}
          </th>
        ))}
        <th className={`${head} border-b border-[#a0a0a0] text-right`}>Kom</th>
      </tr>
    </thead>
    <tbody>
      {cases.map((c) => {
        const shade = c.nr === "LF4" ? "bg-[#ebebeb]" : "bg-white";
        const off = c.nr === "LF4" ? "bg-[#dcdcdc]" : "bg-[#efefef]";
        return (
          <tr key={c.nr}>
            <th
              className={
                c.nr === "LF5"
                  ? "h-4 border-r border-b border-[#6a6a6a] bg-[#0078d7] p-0 font-normal text-white"
                  : "h-4 border-r border-b border-[#6a6a6a] bg-[#e1e1e1] p-0 font-normal shadow-[inset_1px_1px_0_#fff,inset_-1px_-1px_0_#b5b5b5]"
              }
            >
              {c.nr}
            </th>
            <td className={`${cell} ${c.name ? shade : "bg-white"} pl-1 ${c.nr === "LF5" ? "outline outline-dotted -outline-offset-1 outline-black" : ""}`}>
              {c.name}
            </td>
            <td className={`${cell} ${c.name ? shade : off}`}>{c.name && <Check label={`${c.nr} zu berechnen`} on />}</td>
            <td className={`${cell} ${c.name ? shade : off}`}>
              {c.tag && (
                <div className="flex items-center gap-[5px] pl-px">
                  <span className={`h-3 w-[25px] shrink-0 text-center font-[DejaVu_Sans] text-[9px] leading-3 text-white ${c.tagColor}`}>{c.tag}</span>
                  {c.cat}
                </div>
              )}
            </td>
            <td className={`${cell} ${c.name ? shade : off}`}>{c.name && <Check label={`${c.nr} Eigengewicht aktiv`} on={c.own} />}</td>
            {[0, 1, 2].map((i) => (
              <td key={i} className={`${cell} pr-1 text-right ${c.factors ? shade : off}`}>
                {c.factors?.[i]}
              </td>
            ))}
            <td className={`h-4 border-b border-[#a0a0a0] p-0 ${c.name ? shade : off}`} />
          </tr>
        );
      })}
    </tbody>
  </table>
);

const Chevron = ({ d }: { d: string }) => (
  <svg viewBox="0 0 8 8" className="size-2" aria-hidden="true">
    <path d={d} fill="none" stroke="#555" strokeWidth="1.800" />
  </svg>
);

const TablePanel = () => (
  <section className="flex shrink-0 flex-col border-t border-[#eef0f5] bg-[#f0f0f0]">
    <div className="flex h-[19px] items-center justify-between bg-[#b8bfca] pr-1 pl-1 text-[11px] text-[#3f4b5e]">
      <h2>2.1 Lastfälle</h2>
      <PanelControls />
    </div>
    <div className="flex h-[25px] items-center bg-linear-to-b from-[#e9edf5] to-[#d2d7e2] pl-[9px]">
      <Tools items="tblGreen !tblLoad tblDown tblDiag tblWave | tblLeft tblRight | !turnR !turnL cycle | cellPlus cellX cellDots | cellClear | rowDel rowLeft rowRight | tblYellow tblBlue tblPen | tblHand | goggles | excel | calc | abEq fx fxDel" />
    </div>
    <div className="border-t-2 border-l border-[#6a6a6a] pr-[3px] pb-[5px] pl-0.5 font-[Liberation_Sans]">
      <div className="flex">
        <div className="min-w-0 flex-1 overflow-hidden">
          <LoadCaseTable />
        </div>
        <div className="mt-0.5 flex w-4 flex-col bg-[#cdcdcd]">
          <button aria-label="Nach oben" className="flex h-4 items-center justify-center bg-[#f0f0f0]">
            <Chevron d="M1 6l3-3 3 3" />
          </button>
          <div className="flex-1" />
          <button aria-label="Nach unten" className="flex h-4 items-center justify-center bg-[#f0f0f0]">
            <Chevron d="M1 2l3 3 3-3" />
          </button>
        </div>
      </div>
      <div className="mt-px flex h-[17px] border-t border-b border-t-white border-b-[#a0a0a0] bg-[#f0f0f0]">
        <button aria-label="Nach links" className="flex w-4 items-center justify-center">
          <Chevron d="M6 1L3 4l3 3" />
        </button>
        <div className="mr-[45px] flex-1 bg-[#cdcdcd]" />
        <button aria-label="Nach rechts" className="flex w-4 items-center justify-center">
          <Chevron d="M2 1l3 3-3 3" />
        </button>
      </div>
    </div>
    <div className="flex h-[18px] items-start border-t border-b border-t-[#6a6a6a] border-b-[#d6d6d6] font-[Liberation_Sans] text-[11px] text-black">
      <button className="-mt-px h-[17px] rounded-b-sm border border-t-0 border-[#6a6a6a] bg-[#f8f8f8] px-[3px]">Lastfälle</button>
      <button className="h-4 rounded-b-sm border border-t-0 border-[#6a6a6a] bg-[#e3e3e3] px-[3px]">Lastkombinationen</button>
      <button className="h-4 rounded-b-sm border border-t-0 border-[#6a6a6a] bg-[#e3e3e3] px-[3px]">Ergebniskombinationen</button>
    </div>
    <div className="h-[18px]" />
  </section>
);

const modes = [
  ["FANG", "w-[37px]"],
  ["RASTER", "w-[47px]"],
  ["KARTES", "w-[50px]"],
  ["OFANG", "w-[46px]"],
  ["HLINIEN", "w-[49px]"],
  ["DXF", "w-[28px]"],
];

const StatusBar = () => (
  <footer className="flex h-[19px] shrink-0 items-stretch border-t border-[#a3a8b3] bg-linear-to-b from-[#dfe2e8] via-[#a9afbb] via-50% to-[#bcc1cb] pt-0.5 font-[Liberation_Sans] text-[11px] leading-4 text-[#20252e]">
    <span className="w-[417px] pl-[3px]">Löscht den Lastfall.</span>
    <div className="flex gap-0.5">
      {modes.map(([label, width]) => (
        <button key={label} className={`${width} border-t border-r border-l border-black border-r-white/60 text-center`}>
          {label}
        </button>
      ))}
    </div>
    <div className="ml-auto flex">
      <div className="w-[88px] border-l border-[#9b9ea5]" />
      <div className="w-[74px] border-l border-[#9b9ea5]" />
      <div className="w-[74px] border-l border-[#9b9ea5]" />
      <div className="flex w-[90px] items-end justify-end border-l border-[#9b9ea5]">
        <svg viewBox="0 0 10 10" className="size-[10px]" aria-hidden="true">
          <path d="M8 1h2v2H8zM4 5h2v2H4zM8 5h2v2H8zM0 9h2v1H0zM4 9h2v1H4zM8 9h2v1H8z" fill="#5f646d" />
        </svg>
      </div>
    </div>
  </footer>
);

const App = () => (
  <div className='flex h-screen min-h-[640px] flex-col overflow-hidden bg-[#cfd3dc] font-["Open_Sans","Noto_Sans",sans-serif]'>
    <TitleBar />
    <MenuBar />
    <Toolbars />
    <main className="flex min-h-0 flex-1">
      <Navigator />
      <div className="ml-1 flex min-w-0 flex-1 flex-col gap-1">
        <WorkPlane />
        <TablePanel />
      </div>
    </main>
    <StatusBar />
  </div>
);

export default App;
